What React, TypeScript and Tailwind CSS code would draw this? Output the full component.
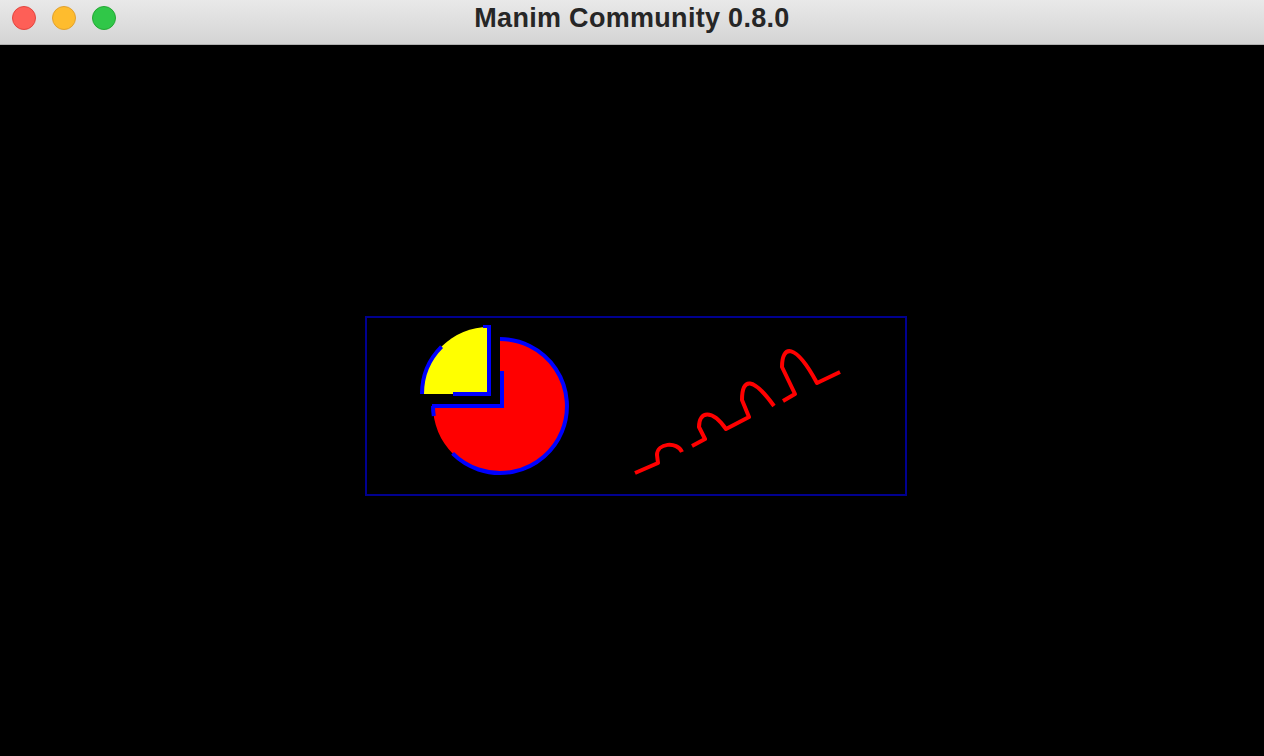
const TrafficLights = () => (
    <div className="flex items-start gap-[16px] self-start pl-[12px] pt-[5.5px]">
        <span className="block h-[24px] w-[24px] rounded-full border border-[#e2463f] bg-[#fe5f57]" />
        <span className="block h-[24px] w-[24px] rounded-full border border-[#e1a130] bg-[#febc2e]" />
        <span className="block h-[24px] w-[24px] rounded-full border border-[#25a834] bg-[#30c748]" />
    </div>
);

const Scene = () => (
    <svg className="block h-full w-full" viewBox="0 45 1264 711" preserveAspectRatio="none">
        <rect x="366" y="317" width="540" height="178" fill="none" stroke="#00008f" strokeWidth="2" />

        {/* red sector, three quarters */}
        <path d="M500,406 L500,339 A67,67 0 1 1 433,406 Z" fill="#ff0000" />
        <path d="M500,339 A67,67 0 1 1 452.6,453.4" fill="none" stroke="#0000ff" strokeWidth="4" />
        <path d="M433,406 A67,67 0 0 0 433.8,416" fill="none" stroke="#0000ff" strokeWidth="4" />
        <path d="M432,406 L502,406 L502,371" fill="none" stroke="#0000ff" strokeWidth="4" />

        {/* yellow sector, one quarter */}
        <path d="M489,394 L489,327 A67,67 0 0 0 422,394 Z" fill="#ffff00" />
        <path d="M422,394 A67,67 0 0 1 441.6,346.6" fill="none" stroke="#0000ff" strokeWidth="4" />
        <path d="M453,394 L489,394 L489,325" fill="none" stroke="#0000ff" strokeWidth="4" />
        <path d="M483,326.5 L489,326.5" fill="none" stroke="#0000ff" strokeWidth="3" />

        {/* wave */}
        <g fill="none" stroke="#ff0000" strokeWidth="4" strokeLinejoin="round">
            <path d="M635,473 L658,463 L657,455 C657,443 677,441 682,452" />
            <path d="M692,446 L705,439 L699,427 C699,411 712,409 726,429 L749,417 L742,400 C742,377 753,377 774,406" />
            <path d="M783,401 L795,394 L782,367 C782,345 795,342 817,383 L840,372" />
        </g>
    </svg>
);

export default function App() {
    return (
        <div className="flex h-[756px] w-[1264px] flex-col bg-black">
            <div className="grid h-[45px] shrink-0 grid-cols-[1fr_auto_1fr] border-b border-[#b0b0b0] bg-gradient-to-b from-[#e9e9e9] to-[#d4d4d4]">
                <TrafficLights />
                <div
                    className="pt-[1px] text-[27px] font-bold leading-[34px] tracking-[0.3px] text-[#262626]"
                    style={{ fontFamily: '"Liberation Sans", Arial, sans-serif' }}
                >
                    Manim Community 0.8.0
                </div>
                <div />
            </div>
            <div className="flex-1 bg-black">
                <Scene />
            </div>
        </div>
    );
}
